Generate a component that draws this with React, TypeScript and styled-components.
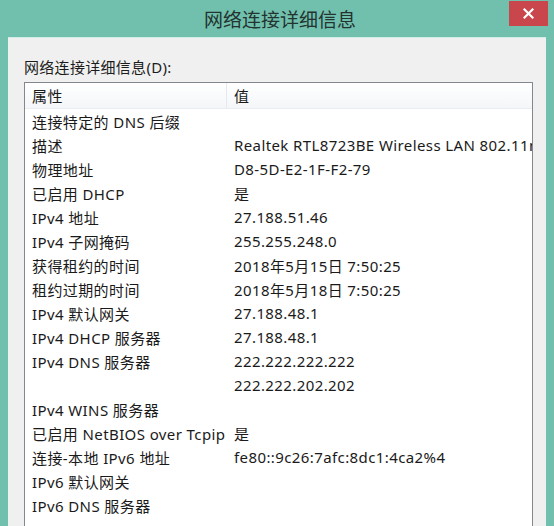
import React from "react";
import styled, { createGlobalStyle } from "styled-components";

const GlobalStyle = createGlobalStyle`
  html, body {
    margin: 0;
    padding: 0;
    background: #71c0ae;
  }
  body {
    font-family: "Noto Sans", "Noto Sans CJK SC", sans-serif;
  }
`;

const Frame = styled.div`
  width: 554px;
  height: 526px;
  box-sizing: border-box;
  padding: 0 8px;
  display: flex;
  flex-direction: column;
  background: #71c0ae;
  overflow: hidden;
`;

const TitleBar = styled.div`
  height: 37px;
  flex: none;
  display: grid;
  grid-template-columns: 1fr auto 1fr;
  align-items: start;
`;

const Title = styled.div`
  grid-column: 2;
  padding: 7px 0 0 6px;
  font-family: "Noto Sans CJK SC", sans-serif;
  font-size: 19px;
  line-height: 24px;
  color: #23332f;
`;

const CloseButton = styled.div`
  grid-column: 3;
  justify-self: end;
  margin-right: -2px;
  margin-top: 1px;
  width: 39px;
  height: 25px;
  background: #c9464c;
  display: flex;
  align-items: center;
  justify-content: center;
`;

const Panel = styled.div`
  flex: 1;
  min-height: 0;
  display: flex;
  flex-direction: column;
  background: #f0f0f0;
  border-top: 1px solid #d4ece6;
  padding: 18px 13px 0 16px;
`;

const Label = styled.div`
  font-size: 15px;
  line-height: 22px;
  letter-spacing: 0.3px;
  color: #1c1c1c;
`;

const ListBox = styled.div`
  margin-top: 4px;
  flex: 1;
  min-height: 0;
  background: #ffffff;
  border: 1px solid #828790;
  border-bottom: none;
  overflow: hidden;
  white-space: nowrap;
`;

const Row = styled.div<{ $header?: boolean }>`
  display: grid;
  grid-template-columns: 202px 1fr;
  height: ${(p) => (p.$header ? "25px" : "24px")};
  align-items: center;
  background: ${(p) =>
    p.$header ? "linear-gradient(#ffffff, #f4f6f9)" : "transparent"};
  border-bottom: ${(p) => (p.$header ? "1px solid #e9ecf0" : "none")};
  font-size: 15px;
  letter-spacing: 0.4px;
  color: #1a1a1a;
`;

const Cell = styled.div<{ $divider?: boolean }>`
  padding-left: 7px;
  overflow: hidden;
  height: 100%;
  display: flex;
  align-items: center;
  border-right: ${(p) => (p.$divider ? "1px solid #e5e8ec" : "none")};
`;

const rows: [string, string][] = [
  ["连接特定的 DNS 后缀", ""],
  ["描述", "Realtek RTL8723BE Wireless LAN 802.11n PCI-E NIC"],
  ["物理地址", "D8-5D-E2-1F-F2-79"],
  ["已启用 DHCP", "是"],
  ["IPv4 地址", "27.188.51.46"],
  ["IPv4 子网掩码", "255.255.248.0"],
  ["获得租约的时间", "2018年5月15日 7:50:25"],
  ["租约过期的时间", "2018年5月18日 7:50:25"],
  ["IPv4 默认网关", "27.188.48.1"],
  ["IPv4 DHCP 服务器", "27.188.48.1"],
  ["IPv4 DNS 服务器", "222.222.222.222"],
  ["", "222.222.202.202"],
  ["IPv4 WINS 服务器", ""],
  ["已启用 NetBIOS over Tcpip", "是"],
  ["连接-本地 IPv6 地址", "fe80::9c26:7afc:8dc1:4ca2%4"],
  ["IPv6 默认网关", ""],
  ["IPv6 DNS 服务器", ""],
];

function App() {
  return (
    <>
      <GlobalStyle />
      <Frame>
        <TitleBar>
          <Title>网络连接详细信息</Title>
          <CloseButton>
            <svg width="11" height="11" viewBox="0 0 11 11">
              <path
                d="M1.5 1.5 L9.5 9.5 M9.5 1.5 L1.5 9.5"
                stroke="#ffffff"
                strokeWidth="2.2"
                strokeLinecap="square"
              />
            </svg>
          </CloseButton>
        </TitleBar>
        <Panel>
          <Label>网络连接详细信息(D):</Label>
          <ListBox>
            <Row $header>
              <Cell $divider>属性</Cell>
              <Cell>值</Cell>
            </Row>
            {rows.map(([name, value], i) => (
              <Row key={i}>
                <Cell>{name}</Cell>
                <Cell>{value}</Cell>
              </Row>
            ))}
          </ListBox>
        </Panel>
      </Frame>
    </>
  );
}

export default App;
